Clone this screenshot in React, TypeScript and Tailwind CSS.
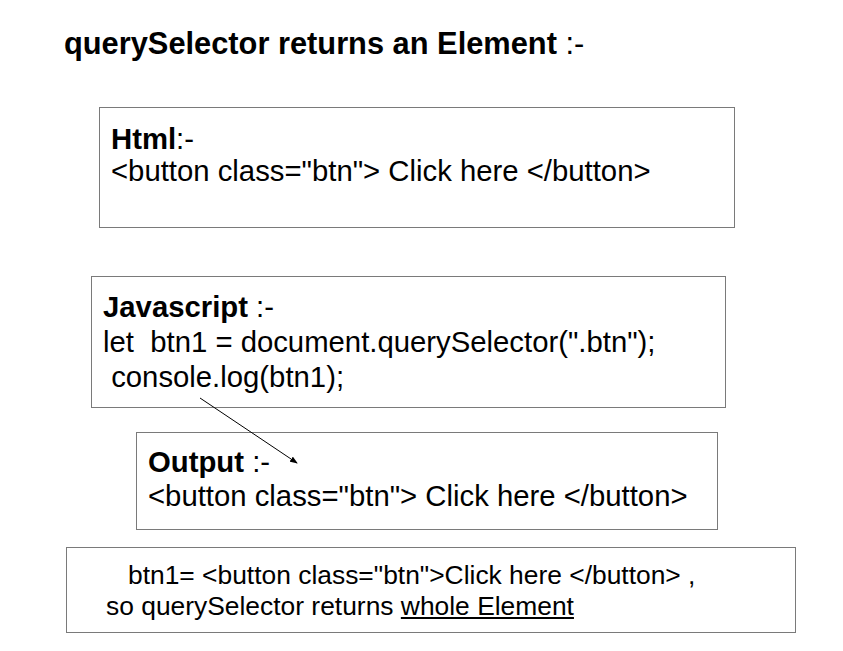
import React from 'react';

const Box = ({ className, children }: { className: string; children: React.ReactNode }) => (
  <div className={`border border-[#7a7a7a] bg-white text-black ${className}`}>{children}</div>
);

const App = () => {
  return (
    <div
      className="relative w-[843px] h-[651px] bg-white text-black overflow-hidden"
      style={{ fontFamily: '"Liberation Sans", Arial, sans-serif' }}
    >
      {/* Title */}
      <h1 className="pt-[27px] pl-[64px] text-[30.8px] leading-[34px] font-bold whitespace-pre">
        querySelector returns an Element <span className="font-normal">:-</span>
      </h1>

      {/* Html */}
      <Box className="ml-[99px] mt-[46px] w-[636px] h-[121px] pl-[11px] pt-[15px] text-[29.3px] leading-[32px]">
        <p>
          <span className="font-bold">Html</span>:-
        </p>
        <p className="whitespace-pre">{'<button class="btn"> Click here </button>'}</p>
      </Box>

      {/* Javascript */}
      <Box className="ml-[91px] mt-[48px] w-[635px] h-[132px] pl-[11px] pt-[12px] text-[29.3px] leading-[35px]">
        <p className="whitespace-pre">
          <span className="font-bold">Javascript</span> :-
        </p>
        <p className="whitespace-pre">{'let  btn1 = document.querySelector(".btn");'}</p>
        <p className="whitespace-pre">{' console.log(btn1);'}</p>
      </Box>

      {/* Output */}
      <Box className="ml-[136px] mt-[24px] w-[582px] h-[98px] pl-[11px] pt-[12px] text-[29.3px] leading-[34px]">
        <p className="whitespace-pre">
          <span className="font-bold">Output</span> :-
        </p>
        <p className="whitespace-pre">{'<button class="btn"> Click here </button>'}</p>
      </Box>

      {/* Summary */}
      <Box className="ml-[66px] mt-[17px] w-[730px] h-[86px] pl-[39px] pt-[12px] text-[26.4px] leading-[31px]">
        <p className="whitespace-pre">{'   btn1= <button class="btn">Click here </button> ,'}</p>
        <p className="whitespace-pre">
          so querySelector returns <span className="underline">whole Element</span>
        </p>
      </Box>

      {/* arrow from console.log to output */}
      <svg className="absolute inset-0 pointer-events-none" width="843" height="651">
        <defs>
          <marker id="head" markerWidth="8" markerHeight="6" refX="7" refY="3" orient="auto" markerUnits="userSpaceOnUse">
            <path d="M0,0 L8,3 L0,6 Z" fill="#000" />
          </marker>
        </defs>
        <line x1="200" y1="398" x2="297" y2="463" stroke="#000" strokeWidth="1" markerEnd="url(#head)" />
      </svg>
    </div>
  );
};

export default App;
